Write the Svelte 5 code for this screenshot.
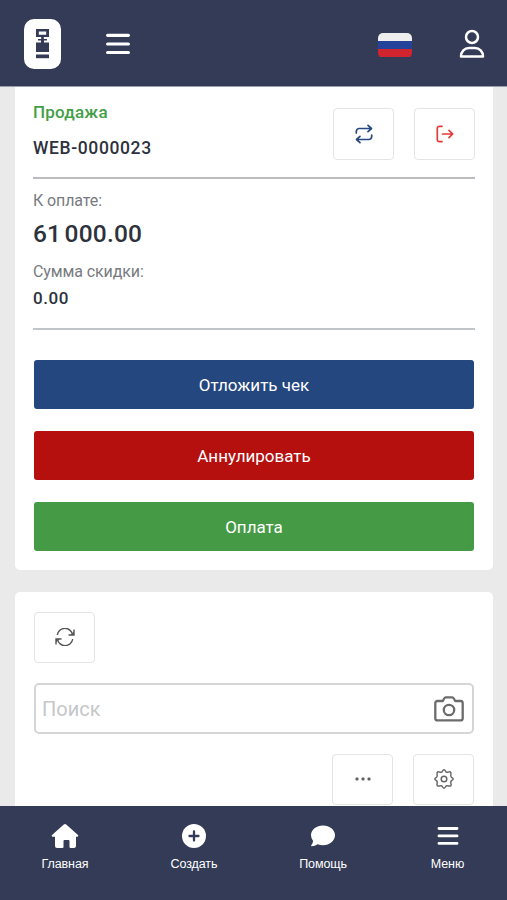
<script>
  let search = '';

  const actions = [
    { label: 'Отложить чек', kind: 'hold' },
    { label: 'Аннулировать', kind: 'cancel' },
    { label: 'Оплата', kind: 'pay' }
  ];

  const links = [
    { label: 'Главная', icon: 'home' },
    { label: 'Создать', icon: 'create' },
    { label: 'Помощь', icon: 'help' },
    { label: 'Меню', icon: 'menu' }
  ];
</script>

<div class="app">
  <header>
    <div class="logo">
      <svg width="37" height="50" viewBox="0 0 37 50">
        <rect width="37" height="50" rx="10" fill="#fff" />
        <path d="M12 10h13v8h-5.200v2H23v1.500h-3v2h5V33H12v-9.500h5v-2h-3V20h3.200v-2H12zM14.800 12.500v3.200h7.400v-3.200z" fill="#333b56" fill-rule="evenodd" />
        <rect x="12" y="35.500" width="13" height="3.700" fill="#333b56" />
      </svg>
    </div>
    <button class="plain burger" aria-label="menu">
      <svg width="24" height="22" viewBox="0 0 24 22" fill="none" stroke="#fff" stroke-width="3.200" stroke-linecap="round">
        <path d="M1.600 2.300h20.800M1.600 11h20.800M1.600 19.500h20.800" />
      </svg>
    </button>
    <div class="flag"><span class="white"></span><span class="blue"></span><span class="red"></span></div>
    <button class="plain user" aria-label="user">
      <svg width="26" height="30" viewBox="0 0 26 30" fill="none" stroke="#fff" stroke-width="2.500" stroke-linejoin="round">
        <circle cx="13" cy="8" r="6" />
        <path d="M2 27.500c0-5 3.500-8.500 8-8.500h6c4.500 0 8 3.500 8 8.500z" />
      </svg>
    </button>
  </header>

  <main>
    <section class="card sale">
      <div class="sale-head">
        <div class="doc">
          <p class="type">Продажа</p>
          <p class="number">WEB-0000023</p>
        </div>
        <div class="tools">
          <button class="tool" aria-label="exchange">
            <svg width="18" height="20" viewBox="0 0 18 20" fill="none" stroke="#27497f" stroke-width="1.700" stroke-linecap="round" stroke-linejoin="round">
              <path d="M1.300 9V7.500a3 3 0 0 1 3-3h11.500M13 1.300l3.500 3.200L13 7.700M16.700 11v1.500a3 3 0 0 1-3 3H2.200M5 12.300l-3.500 3.200L5 18.700" />
            </svg>
          </button>
          <button class="tool" aria-label="exit">
            <svg width="18" height="18" viewBox="0 0 18 18" fill="none" stroke="#e33b38" stroke-width="1.700" stroke-linecap="round" stroke-linejoin="round">
              <path d="M6 1.300H3.300a2 2 0 0 0-2 2v11.400a2 2 0 0 0 2 2H6M6.500 9h10M13 5.300L16.700 9 13 12.700" />
            </svg>
          </button>
        </div>
      </div>
      <div class="totals">
        <p class="caption">К оплате:</p>
        <p class="sum">61 000.00</p>
        <p class="caption discount-caption">Сумма скидки:</p>
        <p class="discount">0.00</p>
      </div>
      <div class="actions">
        {#each actions as action}
          <button class="action {action.kind}">{action.label}</button>
        {/each}
      </div>
    </section>

    <section class="card list">
      <button class="tool" aria-label="refresh">
        <svg width="20" height="18" viewBox="0 0 20 18" fill="none" stroke="#555" stroke-width="1.400">
          <path d="M2.300 7A7.700 7.700 0 0 1 17.500 6.700M17.700 11A7.700 7.700 0 0 1 2.500 11.300" />
          <path d="M19 1.500V7h-5.500M1 16.500V11h5.500" />
          <path d="M19 3.500V7h-3.500zM1 14.500V11h3.500z" fill="#555" stroke="none" />
        </svg>
      </button>
      <div class="search">
        <input placeholder="Поиск" bind:value={search} />
        <svg width="30" height="26" viewBox="0 0 30 26" fill="none" stroke="#6c6c6c" stroke-width="2.300" stroke-linejoin="round">
          <path d="M3.500 5h5.300l1.500-2.700q.5-1 1.500-1h6.400q1 0 1.500 1L21.200 5h5.300a2.200 2.200 0 0 1 2.200 2.200v15a2.200 2.200 0 0 1-2.200 2.200h-23a2.200 2.200 0 0 1-2.200-2.200v-15A2.200 2.200 0 0 1 3.500 5z" />
          <circle cx="15" cy="14" r="5.200" />
        </svg>
      </div>
      <div class="tools end">
        <button class="tool" aria-label="more">
          <svg width="16" height="4" viewBox="0 0 16 4" fill="#606060">
            <rect x=".5" y=".5" width="3" height="3" rx="1" />
            <rect x="6.500" y=".5" width="3" height="3" rx="1" />
            <rect x="12.500" y=".5" width="3" height="3" rx="1" />
          </svg>
        </button>
        <button class="tool" aria-label="settings">
          <svg width="20" height="20" viewBox="0 0 20 20" fill="none" stroke="#666" stroke-width="1.500" stroke-linejoin="round">
            <path d="M8.300 2.500Q10-.8 11.700 2.500q.6 1.200 2.400.6 3.500-1.200 2.800 2.400-.6 1.900.6 2.800 3.300 1.700 0 3.400-1.200.7-.6 2.600 1.200 3.500-2.800 2.600-1.800-.6-2.400.6-1.700 3.300-3.400 0-.6-1.200-2.400-.6-3.600.9-2.800-2.600.6-1.900-.6-2.600-3.300-1.700 0-3.400 1.200-.9.6-2.800-.7-3.600 2.800-2.400 1.800.6 2.400-.6z" />
            <circle cx="10" cy="10" r="2.800" />
          </svg>
        </button>
      </div>
    </section>
  </main>

  <nav>
    {#each links as link}
      <a href="#{link.icon}" class={link.icon}>
        <svg width="28" height="26" viewBox="0 0 28 26" fill="#fff">
          {#if link.icon === 'home'}
            <path d="M12.800 1.500q1.200-1 2.400 0L27 12q1 1.200-.5 1.800H25V23q0 2-2 2h-3.500q-1 0-1-1v-6q0-1-1-1h-4q-1 0-1 1v6q0 1-1 1H6q-2 0-2-2v-9.200H1.500Q0 13.200 1 12z" />
          {:else if link.icon === 'create'}
            <circle cx="14" cy="13" r="12" />
            <path d="M14 8.500v9M9.500 13h9" stroke="#333b56" stroke-width="2.300" stroke-linecap="round" />
          {:else if link.icon === 'help'}
            <path d="M14 2.500c6.700 0 12 4.300 12 9.800s-5.300 9.900-12 9.900q-3 0-5.300-1-2.800 2-6.200 2-.8-.1-.2-.9 1.600-2 1.800-4.300Q2 15.500 2 12.300C2 6.800 7.300 2.500 14 2.500z" />
          {:else}
            <path d="M5 5.500h18M5 12.900h18M5 20.400h18" stroke="#fff" stroke-width="2.900" stroke-linecap="round" />
          {/if}
        </svg>
        <span>{link.label}</span>
      </a>
    {/each}
  </nav>
</div>

<style>
* {
  box-sizing: border-box;
}

:global(body) {
  margin: 0;
}

.app {
  display: flex;
  flex-direction: column;
  width: 507px;
  height: 900px;
  overflow: hidden;
  background: #eaeaea;
  font-family: Roboto, "Noto Sans", sans-serif;
  color: #2d323c;
}

p {
  margin: 0;
}

svg {
  display: block;
}

button {
  font-family: inherit;
}

header {
  display: flex;
  align-items: center;
  flex: none;
  height: 87px;
  padding: 0 22px 0 24px;
  background: #333b56;
  border-bottom: 1px solid #999eac;
}

.plain {
  padding: 0;
  border: none;
  background: none;
}

.logo {
  margin-top: 2px;
}

.burger {
  margin: 2px auto 0 45px;
}

.flag {
  display: flex;
  flex-direction: column;
  width: 34px;
  height: 25px;
  margin: 4px 47px 0 0;
  border-radius: 5px;
  overflow: hidden;
}

.flag span {
  flex: 1;
}

.white {
  background: #eee;
}

.blue {
  background: #25429b;
}

.red {
  background: #d0242f;
}

.user {
  margin-top: 2px;
}

main {
  flex: 1;
  min-height: 0;
  overflow: hidden;
}

.card {
  margin: 0 14px 22px 15px;
  background: #fff;
  border-radius: 5px;
}

.sale {
  height: 483px;
  padding: 0 18px;
  border-radius: 0 0 5px 5px;
}

.sale-head {
  display: flex;
  justify-content: space-between;
  height: 92px;
  border-bottom: 2px solid #b9bbbf;
}

.doc {
  padding-top: 13px;
  font-weight: 500;
  line-height: 24px;
}

.type {
  font-size: 17px;
  color: #43a047;
  letter-spacing: 0.2px;
}

.number {
  margin-top: 12px;
  font-size: 17.500px;
  letter-spacing: 0.620px;
}

.tools {
  display: flex;
  gap: 20px;
  padding-top: 21px;
}

.tool {
  display: flex;
  align-items: center;
  justify-content: center;
  width: 61px;
  height: 52px;
  padding: 0;
  background: #fff;
  border: 1.500px solid #e3e4e5;
  border-radius: 4px;
}

.totals {
  height: 151px;
  padding-top: 12px;
  border-bottom: 2px solid #c2c5c8;
  font-weight: 500;
}

.caption {
  font-size: 16px;
  font-weight: 400;
  line-height: 20px;
  color: #777b80;
  letter-spacing: -0.100px;
}

.sum {
  margin-top: 7px;
  font-size: 24.500px;
  line-height: 32px;
  letter-spacing: 0.200px;
  word-spacing: -3px;
}

.discount-caption {
  margin-top: 12px;
}

.discount {
  margin-top: 6px;
  font-size: 17px;
  line-height: 20px;
  letter-spacing: 0.600px;
}

.actions {
  display: flex;
  flex-direction: column;
  gap: 22px;
  padding: 30px 1px 0;
}

.action {
  height: 49px;
  padding: 0;
  border: none;
  border-radius: 3px;
  font-size: 17px;
  color: #fff;
}

.hold {
  background: #23477e;
}

.cancel {
  background: #b50f0e;
}

.pay {
  background: #459b45;
}

.list {
  height: 260px;
  padding: 20px 19px 0;
}

.list .tool {
  height: 51px;
}

/* optical centering of the icons in the lower toolbar */
.list .tool {
  padding-bottom: 1px;
}

.search {
  display: flex;
  align-items: center;
  height: 51px;
  margin-top: 20px;
  padding: 0 8px 0 6px;
  border: 2px solid #d4d5d6;
  border-radius: 5px;
}

.search input {
  flex: 1;
  min-width: 0;
  padding: 0;
  border: none;
  outline: none;
  font-family: inherit;
  font-size: 20px;
}

.search input::placeholder {
  color: #c5c7c8;
  opacity: 1;
}

.end {
  justify-content: flex-end;
  padding-top: 20px;
}

nav {
  display: flex;
  gap: 57px;
  flex: none;
  height: 94px;
  padding: 17px 0 0 29px;
  background: #333b56;
}

nav a {
  display: flex;
  flex-direction: column;
  align-items: center;
  width: 72px;
  color: #fff;
  text-decoration: none;
  font-family: "Liberation Sans", Arial, sans-serif;
  font-size: 12.500px;
  line-height: 16px;
  letter-spacing: -0.100px;
}

nav .menu {
  margin-left: -4.500px;
}

nav span {
  margin-top: 7px;
}
</style>
